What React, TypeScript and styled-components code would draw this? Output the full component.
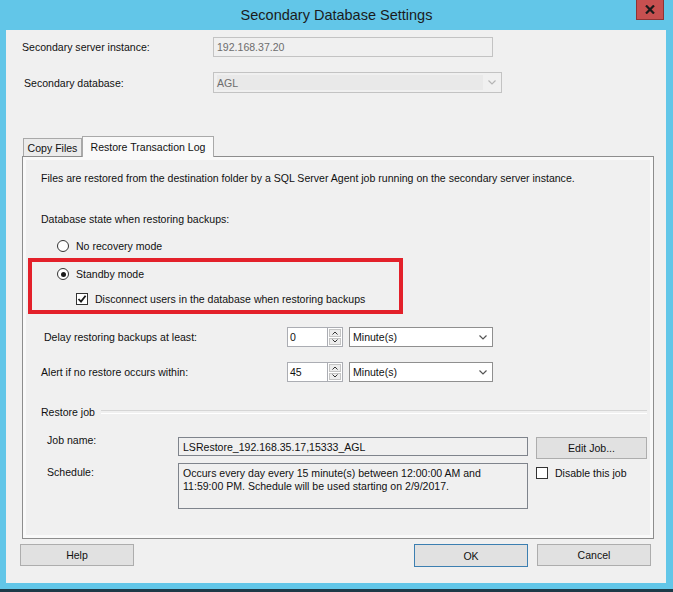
import React from "react";
import styled, { createGlobalStyle } from "styled-components";

const GlobalStyle = createGlobalStyle`
  html, body { margin: 0; padding: 0; background: #62c6e8; }
  body {
    font-family: "Liberation Sans", Arial, sans-serif;
    font-size: 10.55px;
    color: #111;
  }
  * { box-sizing: border-box; }
`;

const Window = styled.div`
  width: 673px;
  height: 592px;
  background: #62c6e8;
  border-bottom: 3px solid #1d3a48;
  display: flex;
  flex-direction: column;
  overflow: hidden;
`;

const TitleBar = styled.div`
  height: 30px;
  display: grid;
  grid-template-columns: 1fr auto 1fr;
  align-items: start;
`;

const Title = styled.div`
  grid-column: 2;
  font-size: 14.5px;
  line-height: 30px;
  color: #1b1b1b;
`;

const CloseButton = styled.div`
  grid-column: 3;
  justify-self: end;
  margin-right: 9px;
  width: 28px;
  height: 20px;
  background: #c75050;
  border: 1px solid #8e3434;
  border-top: none;
  display: flex;
  align-items: center;
  justify-content: center;
`;

const Client = styled.div`
  margin: 0 7px 0 6px;
  height: 553px;
  background: #f0f0f0;
  padding-top: 7px;
  display: flex;
  flex-direction: column;
`;

const FieldRow = styled.div<{ $indent: number; $labelW: number; $gap?: number }>`
  display: grid;
  grid-template-columns: ${(p) => p.$labelW}px auto;
  align-items: center;
  padding-left: ${(p) => p.$indent}px;
  margin-top: ${(p) => p.$gap || 0}px;
`;

const Label = styled.span`
  white-space: nowrap;
`;

const DisabledBox = styled.div<{ $w: number; $h: number }>`
  width: ${(p) => p.$w}px;
  height: ${(p) => p.$h}px;
  border: 1px solid #c3c3c3;
  background: #f0f0f0;
  color: #6d6d6d;
  padding-left: 3px;
  display: flex;
  align-items: center;
  justify-content: space-between;
`;

const DisabledFill = styled.div`
  flex: 1;
  align-self: stretch;
  margin: 2px 0;
  background: #e9e9e9;
  display: flex;
  align-items: center;
`;

const ChevronCell = styled.div`
  width: 18px;
  display: flex;
  align-items: center;
  justify-content: center;
`;

const Tabs = styled.div`
  margin: 43px 0 0 16px;
  width: 632px;
`;

const TabStrip = styled.div`
  height: 20px;
  display: flex;
  align-items: flex-end;
  padding-left: 1px;
`;

const Tab = styled.div<{ $active?: boolean; $w: number }>`
  position: relative;
  z-index: ${(p) => (p.$active ? 2 : 1)};
  width: ${(p) => p.$w}px;
  height: ${(p) => (p.$active ? 21 : 18)}px;
  margin-bottom: ${(p) => (p.$active ? -1 : 0)}px;
  background: ${(p) => (p.$active ? "#f9f9f9" : "#ebebeb")};
  border: 1px solid #a9a9a9;
  border-bottom: none;
  display: flex;
  align-items: center;
  justify-content: center;
  white-space: nowrap;
`;

const Panel = styled.div`
  height: 383px;
  border: 1px solid #8d8d8d;
  background: #f0f0f0;
  box-shadow: inset 0 0 0 3px #f9f9f9;
  display: flex;
  flex-direction: column;
`;

const Text = styled.div<{ $gap: number; $left: number }>`
  margin-top: ${(p) => p.$gap}px;
  padding-left: ${(p) => p.$left}px;
  line-height: 14px;
  white-space: nowrap;
`;

const OptionRow = styled.div<{ $gap: number; $left: number }>`
  margin-top: ${(p) => p.$gap}px;
  padding-left: ${(p) => p.$left}px;
  height: 14px;
  display: flex;
  align-items: center;
  gap: 7px;
  white-space: nowrap;
`;

const RadioCircle = styled.span<{ $checked?: boolean }>`
  width: 12px;
  height: 12px;
  border-radius: 50%;
  border: 1px solid #333;
  background: #fff;
  display: flex;
  align-items: center;
  justify-content: center;
  &::after {
    content: "";
    width: 5px;
    height: 5px;
    border-radius: 50%;
    background: ${(p) => (p.$checked ? "#1a1a1a" : "transparent")};
  }
`;

const CheckBox = styled.span`
  width: 12px;
  height: 12px;
  border: 1px solid #333;
  background: #fff;
  display: flex;
  align-items: center;
  justify-content: center;
  flex: none;
`;

const Highlight = styled.div`
  margin: 5px 0 0 5px;
  width: 375px;
  height: 56px;
  border: 4px solid #e3202a;
  padding-top: 1px;
`;

const SpinRow = styled.div<{ $gap: number; $left: number }>`
  margin-top: ${(p) => p.$gap}px;
  padding-left: ${(p) => p.$left}px;
  display: grid;
  grid-template-columns: ${(p) => 287 - 23 - p.$left}px 40px 16px 144px;
  align-items: center;
  height: 20px;
`;

const SpinInput = styled.div`
  height: 20px;
  border: 1px solid #abadb3;
  border-right: none;
  background: #fff;
  padding-left: 2px;
  display: flex;
  align-items: center;
`;

const SpinButtons = styled.div`
  height: 20px;
  display: flex;
  flex-direction: column;
  border: 1px solid #abadb3;
  background: #fff;
  padding: 1px;
  gap: 1px;
`;

const SpinButton = styled.div`
  flex: 1;
  background: #ececec;
  border: 1px solid #c4c4c4;
  display: flex;
  align-items: center;
  justify-content: center;
`;

const Combo = styled.div`
  margin-left: 6px;
  height: 20px;
  width: 144px;
  border: 1px solid #8f8f8f;
  background: #fff;
  padding-left: 3px;
  display: flex;
  align-items: center;
  justify-content: space-between;
`;

const GroupHeader = styled.div<{ $gap: number }>`
  margin: ${(p) => p.$gap}px 6px 0 18px;
  display: flex;
  align-items: center;
  gap: 6px;
  line-height: 14px;
  &::after {
    content: "";
    flex: 1;
    height: 2px;
    border-top: 1px solid #d5d5d5;
    border-bottom: 1px solid #fff;
  }
`;

const JobRow = styled.div<{ $gap: number }>`
  margin-top: ${(p) => p.$gap}px;
  padding-left: 24px;
  display: grid;
  grid-template-columns: 123px 350px 111px;
  column-gap: 8px;
  align-items: start;
`;

const JobLabel = styled.span<{ $shift: number }>`
  line-height: 14px;
  margin-top: ${(p) => p.$shift}px;
`;

const ReadBox = styled.div<{ $h: number }>`
  height: ${(p) => p.$h}px;
  border: 1px solid #7f848c;
  background: #f0f0f0;
  padding: 3px 4px;
  line-height: 12.5px;
`;

const Button = styled.div<{ $w: number; $default?: boolean }>`
  width: ${(p) => p.$w}px;
  height: ${(p) => (p.$default ? 23 : 22)}px;
  background: #e1e1e1;
  border: 1px solid ${(p) => (p.$default ? "#3c7fb1" : "#adadad")};
  display: flex;
  align-items: center;
  justify-content: center;
  white-space: nowrap;
`;

const CheckOption = styled.div`
  display: flex;
  align-items: center;
  gap: 7px;
  padding-top: 4px;
  white-space: nowrap;
`;

const Footer = styled.div`
  margin-top: 5px;
  padding: 0 15px 0 14px;
  display: flex;
  gap: 9px;
`;

const Spacer = styled.div`
  flex: 1;
`;

const Chevron = ({ color = "#555" }: { color?: string }) => (
  <svg width="8" height="5" viewBox="0 0 8 5">
    <path d="M0.5 0.5 L4 4 L7.5 0.5" fill="none" stroke={color} strokeWidth="1.2" />
  </svg>
);

const Caret = ({ up }: { up?: boolean }) => (
  <svg width="6" height="4" viewBox="0 0 6 4">
    <path d={up ? "M0.5 3.5 L3 1 L5.5 3.5" : "M0.5 0.5 L3 3 L5.5 0.5"} fill="none" stroke="#333" strokeWidth="1" />
  </svg>
);

const Tick = () => (
  <svg width="10" height="10" viewBox="0 0 10 10">
    <path d="M1.5 5 L4 7.6 L8.6 1.8" fill="none" stroke="#1a1a1a" strokeWidth="1.8" />
  </svg>
);

const Spin = ({ value }: { value: string }) => (
  <>
    <SpinInput>{value}</SpinInput>
    <SpinButtons>
      <SpinButton><Caret up /></SpinButton>
      <SpinButton><Caret /></SpinButton>
    </SpinButtons>
    <Combo>
      Minute(s)
      <ChevronCell><Chevron /></ChevronCell>
    </Combo>
  </>
);

export default function App() {
  return (
    <>
      <GlobalStyle />
      <Window>
        <TitleBar>
          <Title>Secondary Database Settings</Title>
          <CloseButton>
            <svg width="10" height="9" viewBox="0 0 10 9">
              <path d="M1 0.5 L9 8.5 M9 0.5 L1 8.5" stroke="#1a1a1a" strokeWidth="2.2" />
            </svg>
          </CloseButton>
        </TitleBar>
        <Client>
          <FieldRow $indent={16} $labelW={191}>
            <Label>Secondary server instance:</Label>
            <DisabledBox $w={280} $h={20}>192.168.37.20</DisabledBox>
          </FieldRow>
          <FieldRow $indent={18} $labelW={189} $gap={15}>
            <Label>Secondary database:</Label>
            <DisabledBox $w={289} $h={21}>
              <DisabledFill>AGL</DisabledFill>
              <ChevronCell><Chevron color="#b5b5b5" /></ChevronCell>
            </DisabledBox>
          </FieldRow>

          <Tabs>
            <TabStrip>
              <Tab $w={59}>Copy Files</Tab>
              <Tab $w={132} $active>Restore Transaction Log</Tab>
            </TabStrip>
            <Panel>
              <Text $gap={14} $left={18}>
                Files are restored from the destination folder by a SQL Server Agent job running on the secondary server instance.
              </Text>
              <Text $gap={27} $left={18}>Database state when restoring backups:</Text>
              <OptionRow $gap={13} $left={34}>
                <RadioCircle />
                No recovery mode
              </OptionRow>
              <Highlight>
                <OptionRow $gap={4} $left={25}>
                  <RadioCircle $checked />
                  Standby mode
                </OptionRow>
                <OptionRow $gap={11} $left={44}>
                  <CheckBox><Tick /></CheckBox>
                  Disconnect users in the database when restoring backups
                </OptionRow>
              </Highlight>
              <SpinRow $gap={13} $left={21}>
                <Label>Delay restoring backups at least:</Label>
                <Spin value="0" />
              </SpinRow>
              <SpinRow $gap={15} $left={18}>
                <Label>Alert if no restore occurs within:</Label>
                <Spin value="45" />
              </SpinRow>
              <GroupHeader $gap={23}>Restore job</GroupHeader>
              <JobRow $gap={18}>
                <JobLabel $shift={-4}>Job name:</JobLabel>
                <ReadBox $h={19}>LSRestore_192.168.35.17,15333_AGL</ReadBox>
                <Button $w={111}>Edit Job...</Button>
              </JobRow>
              <JobRow $gap={4}>
                <JobLabel $shift={2}>Schedule:</JobLabel>
                <ReadBox $h={46}>
                  Occurs every day every 15 minute(s) between 12:00:00 AM and 11:59:00 PM. Schedule will be used starting on 2/9/2017.
                </ReadBox>
                <CheckOption>
                  <CheckBox />
                  Disable this job
                </CheckOption>
              </JobRow>
            </Panel>
          </Tabs>

          <Footer>
            <Button $w={114}>Help</Button>
            <Spacer />
            <Button $w={114} $default>OK</Button>
            <Button $w={114}>Cancel</Button>
          </Footer>
        </Client>
      </Window>
    </>
  );
}
